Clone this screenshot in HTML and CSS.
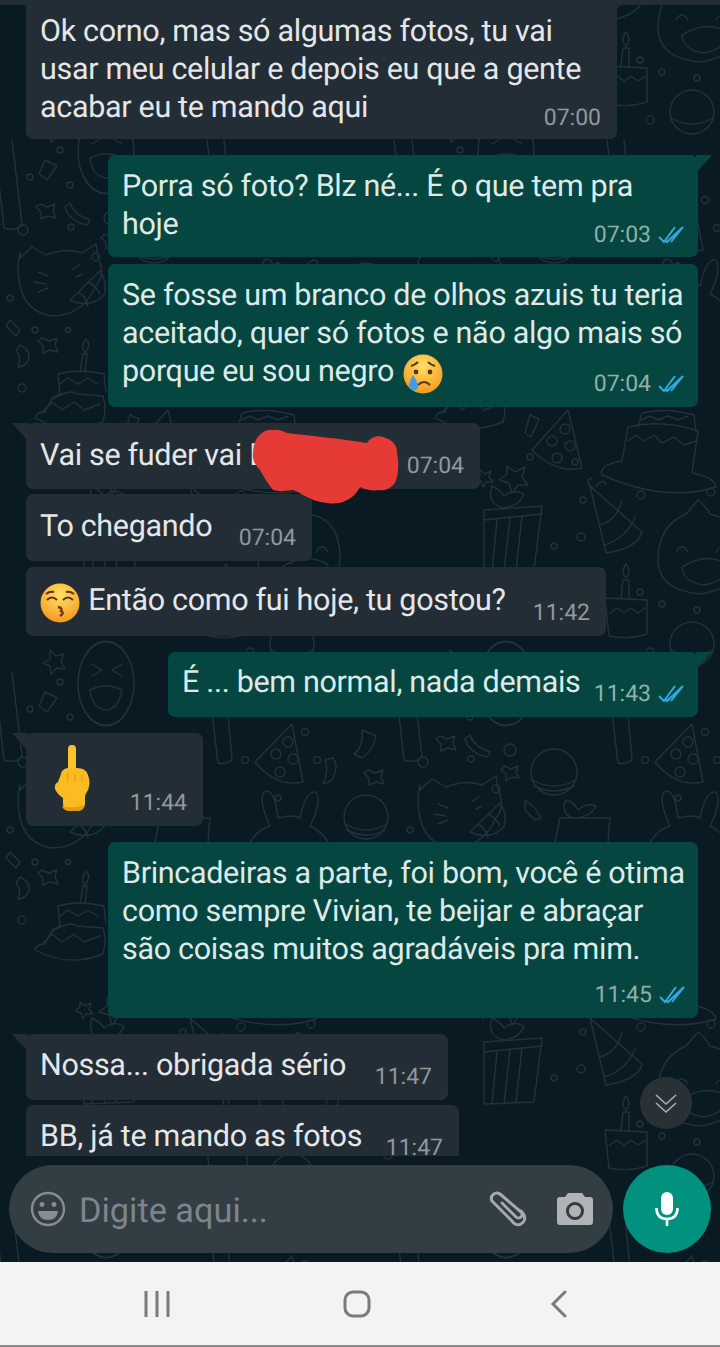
FILE: index.html
```html
<!DOCTYPE html>
<html lang="en">
    <head>
        <meta charset="utf-8">
        <title>Chat</title>
        <link rel="stylesheet" href="styles.css">
    </head>

    <body>
        <div id="screen">
            <svg id="wallpaper" width="720" height="1262" viewBox="0 0 720 1262" fill="none" stroke="#22323b" stroke-width="1.4" stroke-linecap="round" stroke-linejoin="round">
                <defs>
                    <g id="tile">
                        <!-- cake on a plate -->
                        <path d="M202 475 q-4 -10 20 -14 l6 -34 q34 -8 70 4 l-6 42 q22 4 24 14 q-50 16 -114 -12z"/>
                        <path d="M228 441 l8 -6 l8 6 l10 -6 l8 8 l12 -6 l10 8 l12 -4 M238 427 l4 -14 q24 -6 52 2 l2 16 M242 420 l8 -4 l8 4 l10 -4 l10 4 l10 -4"/>
                        <circle cx="311" cy="492" r="4"/><circle cx="241" cy="495" r="4"/>

                        <!-- dotted hat -->
                        <path d="M132 450 L168 410 L182 468 q-26 6 -50 -18z"/>
                        <circle cx="165" cy="429" r="5"/><circle cx="152" cy="441" r="5"/><circle cx="170" cy="446" r="5"/><circle cx="157" cy="458" r="5"/>
                        <path d="M255 230 L292 192 L303 250 q-26 6 -48 -20z"/>
                        <circle cx="288" cy="210" r="5"/><circle cx="276" cy="222" r="5"/><circle cx="293" cy="227" r="5"/><circle cx="280" cy="240" r="5"/>

                        <!-- gift -->
                        <path d="M84 510 L142 506 L134 570 L84 572z M84 520 L142 514 M97 520 L92 572 M110 518 L104 572 M122 516 L116 570"/>
                        <path d="M104 508 q-18 -4 -12 -22 q8 4 12 10 q10 -8 20 -2 q-4 12 -20 14z"/>
                        <path d="M155 310 L160 286 L210 286 L208 310 M172 286 q-12 -6 -6 -18 q8 2 12 10 q8 -8 18 -4 q-6 12 -24 12z"/>

                        <!-- striped hat -->
                        <path d="M190 486 L242 532 q-4 16 -36 21 L190 486z M200 525 q16 -4 22 -24 M205 545 q22 -8 30 -28"/>
                        <path d="M192 488 q-8 -8 0 -10 M196 486 q8 -8 10 -2"/>

                        <!-- laughing face with an ear -->
                        <path d="M258 560 q0 -34 28 -46 l12 -14 q8 6 12 14 q30 6 30 44 q0 30 -40 36 q-42 -4 -42 -34z"/>
                        <path d="M276 552 q6 -10 12 0 M316 552 q6 -10 12 0 M282 567 q26 -16 46 -2 q-2 16 -24 20 q-20 -2 -22 -18z"/>

                        <!-- birthday cake with a candle -->
                        <path d="M205 598 l42 2 v34 q-18 6 -38 2z M210 613 l7 -5 l7 5 l7 -5 l7 5 l7 -5"/>
                        <path d="M221 598 l2 -18 l6 0 l0 18 M226 578 q-6 -6 0 -14 q6 8 0 14"/>

                        <!-- cat in a party hat -->
                        <path d="M20 258 L32 247 L46 255 q20 -8 36 -2 l14 -9 l2 14 q8 16 -2 28 q-14 30 -44 30 q-26 -4 -32 -30 q-4 -18 0 -33z"/>
                        <path d="M38 272 l10 4 M34 282 l12 2 M38 292 l10 -4 M72 270 l8 -6 M76 277 l6 -3"/>
                        <path d="M70 300 L100 271 q8 12 4 24 q-14 14 -34 5z M78 292 q8 4 10 14 M88 282 q8 4 12 12"/>
                        <circle cx="96" cy="257" r="4"/>

                        <!-- two layer cake on the left -->
                        <path d="M35 418 q2 -6 10 -6 l6 -12 q20 -12 26 -6 l26 2 q4 12 0 26 q-34 14 -68 -4z"/>
                        <path d="M52 398 l8 -4 l-2 -20 q20 -6 46 0 l2 18 M60 384 l8 -6 l10 6 l10 -6 l10 6 M42 412 l10 -10 l10 8 l12 -8 l10 8 l16 -6"/>
                        <path d="M80 372 l3 -18 l4 0 l-2 18 M85 353 q-5 -6 1 -14 q6 6 -1 14"/>

                        <!-- candle tubes -->
                        <path d="M207 140 L218 231 q10 2 14 -4 L224 140"/>
                        <path d="M-6 140 L4 228 q12 4 18 -4 L12 140"/>

                        <!-- planets -->
                        <circle cx="154" cy="240" r="23"/>
                        <path d="M132 248 q22 12 44 0 M134 254 q20 10 40 0"/>
                        <circle cx="366" cy="285" r="22"/>
                        <path d="M345 292 q21 12 42 0 M347 298 q20 10 38 0"/>
                        <circle cx="292" cy="112" r="22"/>
                        <path d="M271 118 q21 12 42 0"/>

                        <!-- bunny -->
                        <path d="M250 310 q10 -14 20 -16 q-12 -26 -6 -34 q10 -6 14 26 q14 -4 22 0 q6 -28 16 -26 q6 10 -6 34 q12 6 18 16"/>
                        <circle cx="278" cy="266" r="3"/>

                        <!-- laughing face, left -->
                        <circle cx="106" cy="152" r="28" transform="scale(1 1.5) translate(0 -51)"/>
                        <path d="M92 132 l10 6 l-10 6 M122 132 l-10 6 l10 6 M90 158 q16 -8 32 0 q-4 20 -16 20 q-14 -2 -16 -20z"/>

                        <!-- stars -->
                        <path d="M40 204 l7 3 l8 -3 l-2 7 l3 7 l-8 -2 l-7 3 l0 -7 l-5 -5z"/>
                        <path d="M42 338 l7 3 l8 -3 l-2 7 l3 7 l-8 -2 l-7 3 l0 -7 l-5 -5z"/>
                        <path d="M107 466 l8 6 l10 -5 l-3 10 l6 8 l-10 0 l-6 8 l-3 -10 l-10 -3 l8 -6z"/>
                        <path d="M80 470 l5 4 l6 -3 l-2 6 l4 5 l-7 0 l-3 5 l-2 -6 l-6 -2 l5 -4z"/>
                        <path d="M105 234 l6 3 l7 -3 l-2 6 l3 6 l-7 -1 l-6 4 l0 -7 l-5 -4z"/>
                        <path d="M368 238 l7 3 l8 -3 l-2 7 l3 7 l-8 -2 l-7 3 l0 -7 l-5 -5z"/>
                        <path d="M50 118 l6 6 l8 -2 l-3 8 l4 7 l-8 -1 l-6 6 l-1 -8 l-7 -3 l7 -4z"/>

                        <!-- confetti and swirls -->
                        <path d="M70 203 q4 12 20 17 l-3 5 q-18 -4 -22 -18z"/>
                        <path d="M333 226 q6 8 0 20 q-2 4 -10 6 q6 -12 2 -24z"/>
                        <path d="M362 198 l14 6 q-2 14 -14 22 l-8 -4 q10 -8 8 -24z"/>
                        <path d="M130 415 l9 4 l-8 18 l-6 -4z"/>
                        <path d="M125 268 l10 8 l6 10 l-6 2 l-10 -10z"/>
                        <path d="M20 345 q12 6 8 16 q-4 6 -10 6 q4 -10 -2 -16z"/>
                        <path d="M10 320 l10 10 l-4 6 l-10 -10z"/>
                        <path d="M45 160 l12 6 l-10 14 l-8 -6z"/>

                        <!-- small rings -->
                        <circle cx="22" cy="388" r="4"/><circle cx="10" cy="298" r="3"/><circle cx="35" cy="330" r="3"/>
                        <circle cx="68" cy="330" r="2.5"/><circle cx="30" cy="177" r="3"/><circle cx="60" cy="150" r="3"/>
                        <circle cx="71" cy="227" r="3"/><circle cx="70" cy="185" r="3"/><circle cx="23" cy="230" r="5"/>
                        <circle cx="245" cy="228" r="3.5"/><circle cx="317" cy="228" r="3.5"/><circle cx="305" cy="200" r="3.5"/>
                        <circle cx="110" cy="218" r="6"/><circle cx="130" cy="457" r="3"/><circle cx="183" cy="500" r="3"/>
                        <circle cx="181" cy="537" r="4"/><circle cx="154" cy="546" r="3"/><circle cx="175" cy="462" r="3"/>
                        <circle cx="297" cy="610" r="3"/><circle cx="262" cy="604" r="3"/>
                        <circle cx="388" cy="90" r="5"/><circle cx="240" cy="60" r="3"/><circle cx="250" cy="120" r="4"/>
                    </g>
                </defs>
                <use href="#tile" x="-400" y="-532"/><use href="#tile" x="0" y="-532"/><use href="#tile" x="400" y="-532"/>
                <use href="#tile" x="-400" y="0"/><use href="#tile" x="0" y="0"/><use href="#tile" x="400" y="0"/>
                <use href="#tile" x="-400" y="532"/><use href="#tile" x="0" y="532"/><use href="#tile" x="400" y="532"/>
                <use href="#tile" x="-400" y="1064"/><use href="#tile" x="0" y="1064"/><use href="#tile" x="400" y="1064"/>
            </svg>

            <div id="status-edge"></div>

            <main id="messages">
                <div class="bubble in w-591 h-140 pt-14 first">
                    <p class="text">Ok corno, mas só algumas fotos, tu vai<br>usar meu celular e depois eu que a gente<br>acabar eu te mando aqui</p>
                    <span class="meta">07:00</span>
                </div>

                <div class="bubble out tail w-590 h-102 gap-16">
                    <p class="text">Porra só foto? Blz né... É o que tem pra<br>hoje</p>
                    <span class="meta">07:03 <svg class="ticks" viewBox="0 0 26 18"><use href="#ticks"/></svg></span>
                </div>

                <div class="bubble out w-590 h-143 gap-7">
                    <p class="text">Se fosse um branco de olhos azuis tu teria<br>aceitado, quer só fotos e não algo mais só<br>porque eu sou negro <svg class="emoji" viewBox="0 0 40 40"><use href="#emoji-cry"/></svg></p>
                    <span class="meta">07:04 <svg class="ticks" viewBox="0 0 26 18"><use href="#ticks"/></svg></span>
                </div>

                <div class="bubble in tail w-454 h-66 pt-14 gap-16 redacted">
                    <p class="text">Vai se fuder vai D</p>
                    <span class="meta">07:04</span>
                    <svg class="scribble" width="150" height="78" viewBox="0 0 150 78">
                        <path d="M6 12 C10 4 18 1 23 2 C28 1 33 3 37 5 C64 8 92 11 117 15 C120 9 128 7 133 9 C142 11 148 18 147 25 C149 34 149 46 145 55 C140 61 135 63 130 62 C123 63 116 62 110 59 C106 66 102 70 97 72 C90 76 84 76 77 75 C68 74 60 71 53 67 C50 65 46 63 43 62 C36 63 29 64 23 62 C18 56 14 49 10 42 C5 37 2 31 3 25 C3 20 4 16 6 12z"/>
                    </svg>
                </div>

                <div class="bubble in w-286 h-67 pt-14 gap-5">
                    <p class="text">To chegando</p>
                    <span class="meta">07:04</span>
                </div>

                <div class="bubble in w-580 h-69 pt-15 gap-6">
                    <p class="text"><svg class="emoji first-in-line" viewBox="0 0 40 40"><use href="#emoji-kiss"/></svg> Então como fui hoje, tu gostou?</p>
                    <span class="meta">11:42</span>
                </div>

                <div class="bubble out tail w-530 h-65 pt-12 gap-16">
                    <p class="text">É ... bem normal, nada demais</p>
                    <span class="meta">11:43 <svg class="ticks" viewBox="0 0 26 18"><use href="#ticks"/></svg></span>
                </div>

                <div class="bubble in tail w-177 h-93 gap-16">
                    <svg class="finger" width="38" height="66" viewBox="0 0 38 66"><use href="#emoji-finger"/></svg>
                    <span class="meta">11:44</span>
                </div>

                <div class="bubble out w-590 h-176 gap-16">
                    <p class="text">Brincadeiras a parte, foi bom, você é otima<br>como sempre Vivian, te beijar e abraçar<br>são coisas muitos agradáveis pra mim.</p>
                    <span class="meta">11:45 <svg class="ticks" viewBox="0 0 26 18"><use href="#ticks"/></svg></span>
                </div>

                <div class="bubble in tail w-422 h-66 gap-16">
                    <p class="text">Nossa... obrigada sério</p>
                    <span class="meta">11:47</span>
                </div>

                <div class="bubble in w-433 h-66 gap-5">
                    <p class="text">BB, já te mando as fotos</p>
                    <span class="meta">11:47</span>
                </div>

                <button id="scroll-down" aria-label="Scroll down">
                    <svg width="24" height="24" viewBox="0 0 24 24" fill="none" stroke="#a9b0b3" stroke-width="1.6"><path d="M2 4 L12 13 L22 4 M2 12 L12 21 L22 12"/></svg>
                </button>
            </main>

            <footer id="composer">
                <div id="input-pill">
                    <svg width="36" height="36" viewBox="0 0 36 36" fill="none" stroke="#868e92" stroke-width="2.4"><circle cx="18" cy="18" r="16"/><circle cx="12" cy="13.5" r="2.4" fill="#868e92" stroke="none"/><circle cx="24" cy="13.5" r="2.4" fill="#868e92" stroke="none"/><path d="M8 20 h20 q-1 9 -10 9 q-9 0 -10 -9z" fill="#868e92" stroke="none"/></svg>
                    <span id="placeholder">Digite aqui...</span>
                    <svg class="clip" width="40" height="36" viewBox="0 0 40 36" fill="none" stroke="#a6abae" stroke-width="3" stroke-linecap="round" stroke-linejoin="round"><path d="M14 12 L28 26 A3 3 0 0 0 33 21 L12 3 A5.5 5.5 0 0 0 4 10 L24 30 A6.5 6.5 0 0 0 36 24 L33 20"/></svg>
                    <svg width="36" height="32" viewBox="0 0 36 32"><path fill="#b0b4b7" fill-rule="evenodd" d="M11 0 h14 l3 4 h5 q3 0 3 3 v22 q0 3 -3 3 h-30 q-3 0 -3 -3 v-22 q0 -3 3 -3 h5z M18 9 a9 9 0 1 0 0.01 0z M18 12 a6 6 0 1 1 -0.01 0z"/></svg>
                </div>
                <div id="mic">
                    <svg width="24" height="34" viewBox="0 0 24 34" fill="none" stroke="#fff" stroke-width="2.6"><rect x="6" y="0" width="12" height="23" rx="6" fill="#fff" stroke="none"/><path d="M1.5 16 q0 11 10.5 11 q10.5 0 10.5 -11 M12 27 v7"/></svg>
                </div>
            </footer>
        </div>

        <nav id="system-nav">
            <svg width="28" height="28" viewBox="0 0 28 28" stroke="#7b7b7b" stroke-width="3" fill="none"><path d="M3 1 v26 M14 1 v26 M25 1 v26"/></svg>
            <svg class="home" width="28" height="28" viewBox="0 0 28 28" stroke="#7b7b7b" stroke-width="3" fill="none"><rect x="2" y="2" width="24" height="24" rx="8"/></svg>
            <svg width="18" height="28" viewBox="0 0 18 28" stroke="#7b7b7b" stroke-width="3" fill="none" stroke-linecap="round"><path d="M15 2 L3 14 L15 26"/></svg>
        </nav>

        <svg id="sprites" width="0" height="0">
            <defs>
                <radialGradient id="yellow" cx="50%" cy="30%" r="75%"><stop offset="0" stop-color="#ffe066"/><stop offset="1" stop-color="#f4951a"/></radialGradient>
                <path id="ticks" fill="none" stroke="#35a8df" stroke-width="2" d="M1 11 L6 16 L17 1 M8 15 L9 16 L25 1 M13 16 L25 1"/>
                <g id="emoji-cry">
                    <circle cx="20" cy="20" r="19.5" fill="url(#yellow)"/>
                    <circle cx="13" cy="18" r="2.4" fill="#5b3410"/><circle cx="27" cy="18" r="2.4" fill="#5b3410"/>
                    <path d="M8 12 q4 -1 7 -4 M32 12 q-4 -1 -7 -4 M15 31 q6 -6 12 0" fill="none" stroke="#5b3410" stroke-width="2"/>
                    <path d="M10 21 q-4 7 -4 11 a4.5 4.5 0 0 0 9 0 q0 -4 -5 -11z" fill="#3f9ce8"/>
                </g>
                <g id="emoji-kiss">
                    <circle cx="20" cy="20" r="19.5" fill="url(#yellow)"/>
                    <path d="M7 17 q5 -5 10 0 M23 17 q5 -5 10 0 M6 11 q4 -3 8 -2 M34 11 q-4 -3 -8 -2" fill="none" stroke="#5b3410" stroke-width="2"/>
                    <path d="M18 24 q5 1 3 4 q4 2 -1 5" fill="none" stroke="#7a2f10" stroke-width="2.4"/>
                </g>
                <g id="emoji-finger">
                    <rect x="15" y="0" width="8" height="32" rx="4" fill="#fcc22c"/>
                    <path d="M9 26 q3 -3 6 -3 h9 q9 0 11 7 q3 8 0 15 q-2 3 -3 6 v8 q-1 5 -6 6 h-11 q-5 -1 -5 -6 v-6 q-6 -4 -8 -9 q-1 -5 3 -7 q2 -5 4 -11z" fill="#fbbb22"/>
                    <path d="M9 61 q10 3 23 -1 q-1 5 -6 6 h-11 q-5 -1 -6 -5z" fill="#ea9a14"/>
                    <path d="M15 28 q-1 4 0 8 M22 29 v8 M29 30 v7" fill="none" stroke="#ea9a12" stroke-width="1.2"/>
                </g>
            </defs>
        </svg>
    </body>
</html>
```

FILE: styles.css
```css
:root, body {
    width: 720px;
    height: 1347px;
    margin: 0;
    overflow: hidden;
}

body {
    display: flex;
    flex-direction: column;
    background-color: #0b1a21;
    font-family: Roboto, "Liberation Sans", sans-serif;
    text-rendering: geometricPrecision;
}

#sprites {
    display: block;
    height: 0;
}

#screen {
    position: relative;
    display: flex;
    flex-direction: column;
    height: 1262px;
    flex-shrink: 0;
    background-color: #0a1a22;
    overflow: hidden;
}

#wallpaper {
    position: absolute;
    top: 0;
    left: 0;
}

#status-edge {
    position: absolute;
    top: 0;
    left: 0;
    width: 100%;
    height: 5px;
    background-color: #232d36;
}

#messages {
    position: relative;
    display: flex;
    flex-direction: column;
    height: 1156px;
    overflow: hidden;
    flex-shrink: 0;
}

.bubble {
    position: relative;
    display: grid;
    box-sizing: border-box;
    padding: 13px 16px 14px 15px;
    border-radius: 7px;
    flex-shrink: 0;
}

.bubble > * {
    grid-area: 1 / 1;
}

.bubble.in {
    align-self: flex-start;
    margin-left: 26px;
    background-color: #232d36;
    color: #e4e6e8;
}

.bubble.out {
    align-self: flex-end;
    margin-right: 22px;
    padding-right: 14px;
    background-color: #054740;
    color: #dfe9e7;
}

.bubble.in.tail::before,
.bubble.out.tail::before {
    content: "";
    position: absolute;
    top: 0;
    width: 16px;
    height: 18px;
}

.bubble.in.tail::before {
    left: -14px;
    background-color: #232d36;
    clip-path: polygon(0 0, 100% 0, 100% 100%);
}

.bubble.out.tail::before {
    right: -14px;
    background-color: #054740;
    clip-path: polygon(0 0, 100% 0, 0 100%);
}

.first { margin-top: -1px; }

.gap-5 { margin-top: 5px; }
.gap-6 { margin-top: 6px; }
.gap-7 { margin-top: 7px; }
.gap-16 { margin-top: 16px; }

.bubble.pt-12 { padding-top: 12px; }
.bubble.pt-14 { padding-top: 14px; }
.bubble.pt-15 { padding-top: 15px; }

.w-591 { width: 591px; }
.w-590 { width: 590px; }
.w-580 { width: 580px; }
.w-530 { width: 530px; }
.w-454 { width: 454px; }
.w-433 { width: 433px; }
.w-422 { width: 422px; }
.w-286 { width: 286px; }
.w-177 { width: 177px; }

.h-65 { height: 65px; }
.h-66 { height: 66px; }
.h-67 { height: 67px; }
.h-69 { height: 69px; }
.h-93 { height: 93px; }
.h-102 { height: 102px; }
.h-140 { height: 140px; }
.h-143 { height: 143px; }
.h-176 { height: 176px; }

.text {
    margin: 0 0 0 -1px;
    font-size: 30.5px;
    line-height: 38px;
    letter-spacing: -0.32px;
    white-space: nowrap;
}

.meta {
    display: flex;
    align-items: center;
    gap: 7px;
    justify-self: end;
    align-self: end;
    margin-bottom: -3px;
    font-size: 23px;
    line-height: 24px;
    color: #8f999f;
    white-space: nowrap;
}

.bubble.out .meta {
    color: #8fb0a9;
}

.ticks {
    width: 26px;
    height: 18px;
}

.emoji {
    width: 40px;
    height: 40px;
    margin: -4px 0 -4px 2px;
    vertical-align: -9px;
}

.emoji.first-in-line {
    margin-left: 0;
    margin-right: 1px;
}

.redacted {
    z-index: 1;
}

.scribble {
    grid-area: auto;
    position: absolute;
    left: 224px;
    top: 5px;
    fill: #e53a35;
}

.finger {
    margin: -1px 0 0 12px;
}

#scroll-down {
    position: absolute;
    left: 640px;
    top: 1077px;
    display: flex;
    align-items: center;
    justify-content: center;
    width: 52px;
    height: 52px;
    padding: 0;
    border: 0;
    border-radius: 50%;
    background-color: #2a3136;
}

#composer {
    position: relative;
    display: flex;
    gap: 10px;
    margin: 9px 9px 0;
}

#input-pill {
    display: flex;
    align-items: center;
    box-sizing: border-box;
    width: 604px;
    height: 88px;
    padding: 0 20px 0 21px;
    border-radius: 44px;
    background-color: #333d44;
}

#placeholder {
    flex-grow: 1;
    margin: 3px 0 0 13px;
    font-size: 34.3px;
    color: #7b868c;
}

.clip {
    margin-right: 29px;
}

#mic {
    display: flex;
    align-items: center;
    justify-content: center;
    width: 88px;
    height: 88px;
    border-radius: 50%;
    background-color: #00917f;
}

#system-nav {
    display: flex;
    align-items: center;
    box-sizing: border-box;
    height: 85px;
    padding-left: 143px;
    background-color: #f3f3f3;
    border-bottom: 2px solid #8a8a8a;
}

.home {
    margin: 0 179px 0 172px;
}
```
